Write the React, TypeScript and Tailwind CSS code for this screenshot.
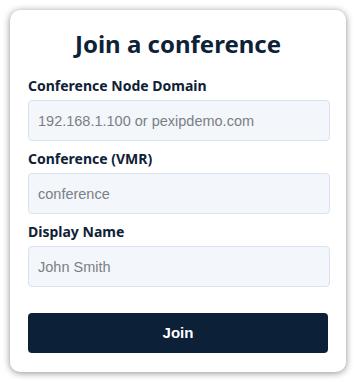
import { useState } from 'react';

// Form fields for joining a conference
const FIELDS = [
  { id: 'domain', label: 'Conference Node Domain', placeholder: '192.168.1.100 or pexipdemo.com' },
  { id: 'vmr', label: 'Conference (VMR)', placeholder: 'conference' },
  { id: 'name', label: 'Display Name', placeholder: 'John Smith' },
];

export default function App() {
  const [values, setValues] = useState<Record<string, string>>({});

  return (
    <div className="min-h-screen bg-white p-[10px]">
      <div className="w-[336px] rounded-[10px] bg-white px-[18px] pt-[18px] pb-[19px] shadow-[0_1px_7px_rgba(0,0,0,0.45)]">
        <h1 className="text-center text-[24px] leading-[32px] font-bold text-[#0d2137] [font-family:'Noto_Sans',sans-serif]">
          Join a conference
        </h1>

        <div className="mt-[16px] flex flex-col">
          {FIELDS.map((f, i) => (
            <div key={f.id} className={i > 0 ? 'mt-[8px]' : ''}>
              <label
                htmlFor={f.id}
                className="block text-[14px] leading-[20px] font-bold text-[#0d2137] [font-family:'Noto_Sans',sans-serif]"
              >
                {f.label}
              </label>
              <input
                id={f.id}
                value={values[f.id] ?? ''}
                onChange={(e) => setValues({ ...values, [f.id]: e.target.value })}
                placeholder={f.placeholder}
                className="mt-[4px] block h-[41px] w-[302px] rounded-[4px] border border-[#d9e2ee] bg-[#f3f6fb] px-[9px] text-[14.5px] text-[#333] placeholder:text-[#7a7f86] outline-none [font-family:'Liberation_Sans',Arial,sans-serif]"
              />
            </div>
          ))}
        </div>

        <button className="mt-[26px] h-[40px] w-[300px] rounded-[4px] bg-[#0c2137] text-[15px] font-bold text-white [font-family:'Liberation_Sans',Arial,sans-serif]">
          Join
        </button>
      </div>
    </div>
  );
}
